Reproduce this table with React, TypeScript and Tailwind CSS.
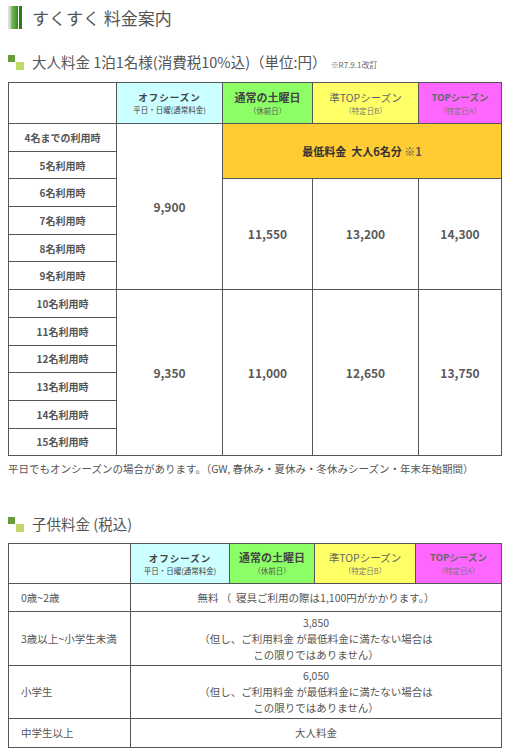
import React from 'react';

const font = { fontFamily: '"Noto Sans CJK JP", "Noto Sans", sans-serif' };

const TitleBar = () => (
  <div className="flex h-[23px] w-[14px] shrink-0">
    <span className="w-[3px] h-full bg-gradient-to-r from-[#e6e6e6] to-[#b9cfb0]" />
    <span className="w-[7px] h-full bg-gradient-to-r from-[#7fc45a] to-[#2f8a1d]" />
    <span className="w-[1px] h-full bg-white" />
    <span className="w-[3px] h-full bg-[#2a7a16]" />
  </div>
);

const Squares = () => (
  <div className="relative w-[17px] h-[15px] shrink-0">
    <span className="absolute left-0 top-0 w-[7px] h-[7px] bg-[#6a9b3d]" />
    <span className="absolute left-[8px] top-[7px] w-[8px] h-[8px] bg-[#bfd96a]" />
  </div>
);

const SectionHead = ({ children, className }: { children: React.ReactNode; className: string }) => (
  <div className={`flex items-center gap-[7px] h-[16px] ${className}`}>
    <Squares />
    <div className="text-[14.5px] leading-none text-[#555] whitespace-nowrap">{children}</div>
  </div>
);

const HeaderCells = () => (
  <>
    <th className="border border-[#555] bg-[#ccffff] font-normal align-middle">
      <div className="text-[9.5px] font-bold leading-[14px] tracking-[1px] text-[#444]">オフシーズン</div>
      <div className="text-[7.5px] leading-[12px] text-[#444]">平日・日曜(通常料金)</div>
    </th>
    <th className="border border-[#555] bg-[#8cff66] font-normal align-middle">
      <div className="text-[11px] font-bold leading-[15px] text-[#444]">通常の土曜日</div>
      <div className="text-[7.5px] leading-[12px] text-[#555]">（休前日）</div>
    </th>
    <th className="border border-[#555] bg-[#ffff66] font-normal align-middle">
      <div className="text-[10.5px] leading-[15px] text-[#666]">準TOPシーズン</div>
      <div className="text-[7.5px] leading-[12px] text-[#777]">（特定日B）</div>
    </th>
    <th className="border border-[#555] bg-[#ff66ff] font-normal align-middle">
      <div className="text-[9.5px] font-bold leading-[15px] text-[#666]">TOPシーズン</div>
      <div className="text-[7.5px] leading-[12px] text-[#777]">（特定日A）</div>
    </th>
  </>
);

const group1 = ['4名までの利用時', '5名利用時', '6名利用時', '7名利用時', '8名利用時', '9名利用時'];
const group2 = ['10名利用時', '11名利用時', '12名利用時', '13名利用時', '14名利用時', '15名利用時'];

const label = 'border border-[#555] text-[10px] font-bold text-[#555] text-center';
const value = 'border border-[#555] text-[12px] font-bold text-[#5a5a5a] text-center';

export default function App() {
  return (
    <div className="bg-white w-[509px] min-h-[753px] px-[8px] text-[#555]" style={font}>
      <div className="flex items-center gap-[10px] pt-[6px]">
        <TitleBar />
        <div className="text-[17px] leading-none text-[#555]">すくすく&nbsp;料金案内</div>
      </div>

      <SectionHead className="mt-[25px]">
        大人料金 1泊1名様(消費税10%込)（単位:円）
        <span className="text-[8px] ml-[4px] text-[#666]">※R7.9.1改訂</span>
      </SectionHead>

      <table className="mt-[12px] w-[493px] table-fixed border-collapse">
        <colgroup>
          <col className="w-[108px]" />
          <col className="w-[106px]" />
          <col className="w-[90px]" />
          <col className="w-[106px]" />
          <col className="w-[83px]" />
        </colgroup>
        <thead>
          <tr className="h-[41px] text-center">
            <th className="border border-[#555] bg-white" />
            <HeaderCells />
          </tr>
        </thead>
        <tbody>
          {group1.map((g, i) => (
            <tr key={g} className="h-[27.7px]">
              <td className={label}>{g}</td>
              {i === 0 && (
                <td rowSpan={6} className={value}>9,900</td>
              )}
              {i === 0 && (
                <td colSpan={3} rowSpan={2} className="border border-[#555] bg-[#ffcc33] text-center text-[11px] font-bold text-[#333]">
                  最低料金&nbsp;&nbsp;大人6名分 <span className="text-[#555]">※1</span>
                </td>
              )}
              {i === 2 && (
                <>
                  <td rowSpan={4} className={value}>11,550</td>
                  <td rowSpan={4} className={value}>13,200</td>
                  <td rowSpan={4} className={value}>14,300</td>
                </>
              )}
            </tr>
          ))}
          {group2.map((g, i) => (
            <tr key={g} className="h-[27.7px]">
              <td className={label}>{g}</td>
              {i === 0 && (
                <>
                  <td rowSpan={6} className={value}>9,350</td>
                  <td rowSpan={6} className={value}>11,000</td>
                  <td rowSpan={6} className={value}>12,650</td>
                  <td rowSpan={6} className={value}>13,750</td>
                </>
              )}
            </tr>
          ))}
        </tbody>
      </table>

      <p className="mt-[5px] text-[10.5px] leading-[16px] text-[#555] whitespace-nowrap">
        平日でもオンシーズンの場合があります。（GW, 春休み・夏休み・冬休みシーズン・年末年始期間）
      </p>

      <SectionHead className="mt-[39px]">子供料金 (税込)</SectionHead>

      <table className="mt-[11px] w-[493px] table-fixed border-collapse">
        <colgroup>
          <col className="w-[122px]" />
          <col className="w-[99px]" />
          <col className="w-[85px]" />
          <col className="w-[101px]" />
          <col className="w-[86px]" />
        </colgroup>
        <thead>
          <tr className="h-[40px] text-center">
            <th className="border border-[#555] bg-white" />
            <HeaderCells />
          </tr>
        </thead>
        <tbody className="text-[10.5px] text-[#555]">
          <tr className="h-[28px]">
            <td className="border border-[#555] pl-[12px]">0歳~2歳</td>
            <td colSpan={4} className="border border-[#555] text-center">
              無料 （&nbsp;&nbsp;寝具ご利用の際は1,100円がかかります。）
            </td>
          </tr>
          <tr className="h-[54px]">
            <td className="border border-[#555] pl-[12px]">3歳以上~小学生未満</td>
            <td colSpan={4} className="border border-[#555] text-center leading-[16px]">
              3,850
              <br />（但し、ご利用料金 が最低料金に満たない場合は
              <br />この限りではありません）
            </td>
          </tr>
          <tr className="h-[53px]">
            <td className="border border-[#555] pl-[12px]">小学生</td>
            <td colSpan={4} className="border border-[#555] text-center leading-[16px]">
              6,050
              <br />（但し、ご利用料金 が最低料金に満たない場合は
              <br />この限りではありません）
            </td>
          </tr>
          <tr className="h-[29px]">
            <td className="border border-[#555] pl-[12px]">中学生以上</td>
            <td colSpan={4} className="border border-[#555] text-center">大人料金</td>
          </tr>
        </tbody>
      </table>
    </div>
  );
}
